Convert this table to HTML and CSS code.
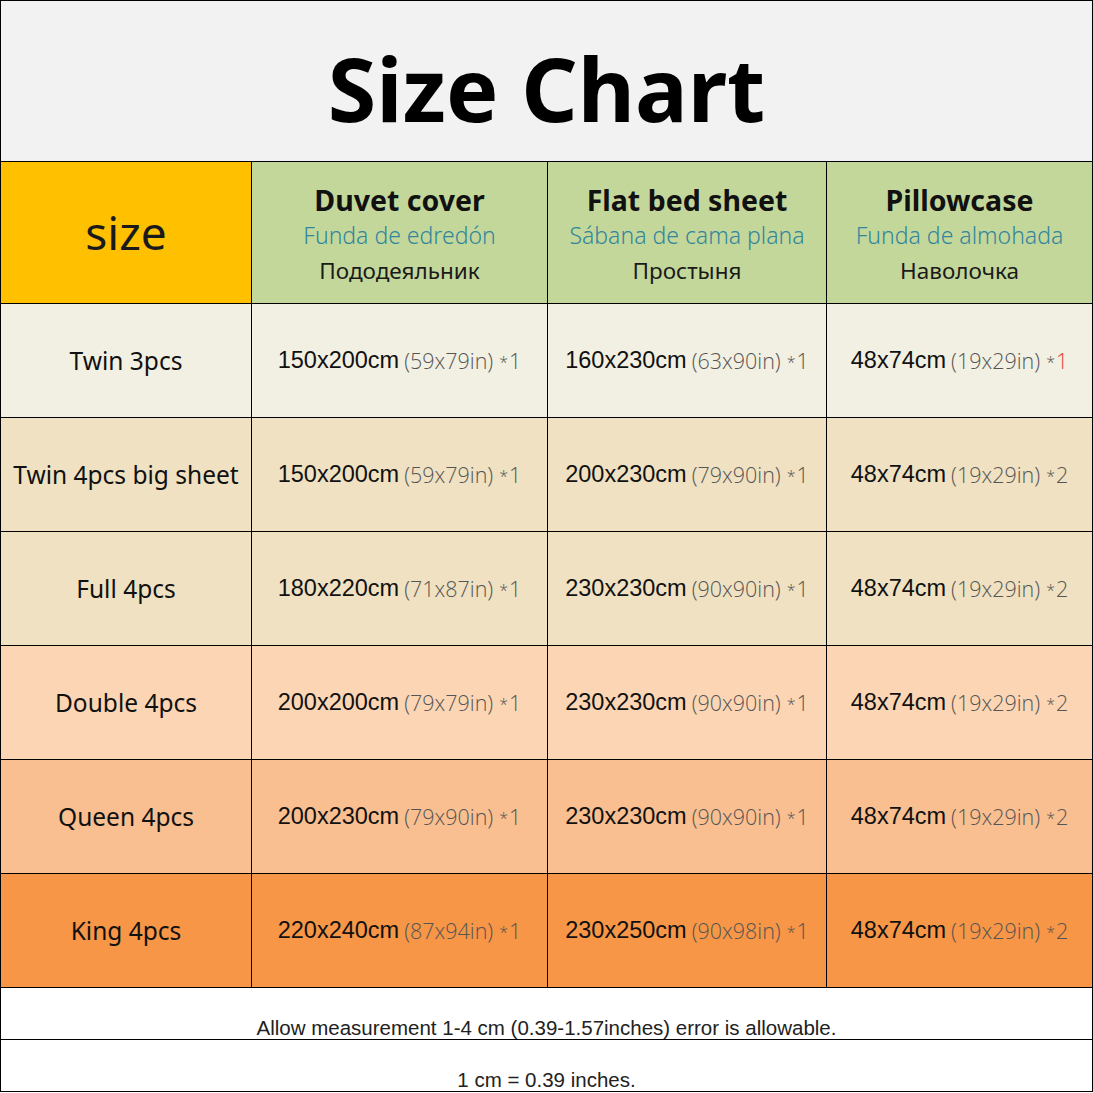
FILE: index.html
```html
<!DOCTYPE html>
<html>
<head>
<meta charset="utf-8">
<link rel="stylesheet" href="styles.css">
</head>
<body>
<div class="chart">
  <div class="title">Size Chart</div>

  <div class="cell head-size">size</div>
  <div class="cell head">
    <div class="en">Duvet cover</div>
    <div class="es">Funda de edredón</div>
    <div class="ru">Пододеяльник</div>
  </div>
  <div class="cell head">
    <div class="en">Flat bed sheet</div>
    <div class="es">Sábana de cama plana</div>
    <div class="ru">Простыня</div>
  </div>
  <div class="cell head">
    <div class="en">Pillowcase</div>
    <div class="es">Funda de almohada</div>
    <div class="ru">Наволочка</div>
  </div>

  <div class="cell label r1">Twin 3pcs</div>
  <div class="cell r1"><span class="cm">150x200cm</span> <span class="in">(59x79in)</span> <span class="qty"><span class="star">*</span>1</span></div>
  <div class="cell r1"><span class="cm">160x230cm</span> <span class="in">(63x90in)</span> <span class="qty"><span class="star">*</span>1</span></div>
  <div class="cell r1"><span class="cm">48x74cm</span> <span class="in">(19x29in)</span> <span class="qty"><span class="star">*</span><span class="red">1</span></span></div>

  <div class="cell label r2">Twin 4pcs big sheet</div>
  <div class="cell r2"><span class="cm">150x200cm</span> <span class="in">(59x79in)</span> <span class="qty"><span class="star">*</span>1</span></div>
  <div class="cell r2"><span class="cm">200x230cm</span> <span class="in">(79x90in)</span> <span class="qty"><span class="star">*</span>1</span></div>
  <div class="cell r2"><span class="cm">48x74cm</span> <span class="in">(19x29in)</span> <span class="qty"><span class="star">*</span>2</span></div>

  <div class="cell label r3">Full 4pcs</div>
  <div class="cell r3"><span class="cm">180x220cm</span> <span class="in">(71x87in)</span> <span class="qty"><span class="star">*</span>1</span></div>
  <div class="cell r3"><span class="cm">230x230cm</span> <span class="in">(90x90in)</span> <span class="qty"><span class="star">*</span>1</span></div>
  <div class="cell r3"><span class="cm">48x74cm</span> <span class="in">(19x29in)</span> <span class="qty"><span class="star">*</span>2</span></div>

  <div class="cell label r4">Double 4pcs</div>
  <div class="cell r4"><span class="cm">200x200cm</span> <span class="in">(79x79in)</span> <span class="qty"><span class="star">*</span>1</span></div>
  <div class="cell r4"><span class="cm">230x230cm</span> <span class="in">(90x90in)</span> <span class="qty"><span class="star">*</span>1</span></div>
  <div class="cell r4"><span class="cm">48x74cm</span> <span class="in">(19x29in)</span> <span class="qty"><span class="star">*</span>2</span></div>

  <div class="cell label r5">Queen 4pcs</div>
  <div class="cell r5"><span class="cm">200x230cm</span> <span class="in">(79x90in)</span> <span class="qty"><span class="star">*</span>1</span></div>
  <div class="cell r5"><span class="cm">230x230cm</span> <span class="in">(90x90in)</span> <span class="qty"><span class="star">*</span>1</span></div>
  <div class="cell r5"><span class="cm">48x74cm</span> <span class="in">(19x29in)</span> <span class="qty"><span class="star">*</span>2</span></div>

  <div class="cell label r6">King 4pcs</div>
  <div class="cell r6"><span class="cm">220x240cm</span> <span class="in">(87x94in)</span> <span class="qty"><span class="star">*</span>1</span></div>
  <div class="cell r6"><span class="cm">230x250cm</span> <span class="in">(90x98in)</span> <span class="qty"><span class="star">*</span>1</span></div>
  <div class="cell r6"><span class="cm">48x74cm</span> <span class="in">(19x29in)</span> <span class="qty"><span class="star">*</span>2</span></div>

  <div class="note">Allow measurement 1-4 cm (0.39-1.57inches) error is allowable.</div>
  <div class="note">1 cm = 0.39 inches.</div>
</div>
</body>
</html>
```

FILE: styles.css
```css
html, body {
  margin: 0;
  padding: 0;
  background: #ffffff;
}

.chart {
  width: 1093px;
  box-sizing: border-box;
  border-left: 1px solid #000;
  border-top: 1px solid #000;
  display: grid;
  grid-template-columns: 251px 296px 279px 266px;
  grid-template-rows: 161px 142px repeat(6, 114px) 52px 52px;
  font-family: "Noto Sans", "Open Sans", sans-serif;
}

.title {
  grid-column: 1 / -1;
  background: #f2f2f2;
  border-right: 1px solid #000;
  border-bottom: 1px solid #000;
  display: flex;
  align-items: center;
  justify-content: center;
  padding-top: 14px;
  box-sizing: border-box;
  font-family: "Noto Sans", "Open Sans", sans-serif;
  font-weight: 700;
  font-size: 88px;
  color: #000;
}

.cell {
  box-sizing: border-box;
  border-right: 1px solid #000;
  border-bottom: 1px solid #000;
  display: flex;
  align-items: center;
  justify-content: center;
  text-align: center;
  white-space: nowrap;
}

.head-size {
  background: #ffc000;
  font-size: 46px;
  color: #1a1a1a;
  padding-bottom: 2px;
}

.head {
  background: #c4d79b;
  flex-direction: column;
  padding-top: 6px;
}

.head .en {
  font-family: "Noto Sans", "Open Sans", sans-serif;
  font-weight: 700;
  font-size: 28.5px;
  line-height: 35px;
  color: #111;
}

.head .es {
  font-size: 23px;
  line-height: 35px;
  color: #31869b;
  font-weight: 300;
}

.head .ru {
  font-size: 22.5px;
  line-height: 35px;
  color: #1a1a1a;
  font-weight: 400;
}

.label {
  font-size: 24.5px;
  color: #111;
}

.cm {
  font-family: "Liberation Sans", Arial, sans-serif;
  font-size: 23.5px;
  color: #111;
}

.in {
  font-family: "Open Sans", "Noto Sans", sans-serif;
  font-weight: 300;
  font-size: 21.5px;
  color: #555;
  margin-left: 5px;
}

.qty {
  font-family: "Open Sans", "Noto Sans", sans-serif;
  font-weight: 300;
  font-size: 21.5px;
  color: #555;
  margin-left: 6px;
}

.star {
  font-size: 16px;
  vertical-align: 1px;
  margin-right: 1px;
}

.qty .red {
  color: #e53935;
}

.r1 { background: #f2f0e2; }
.r2 { background: #efe1c1; }
.r3 { background: #efe1c1; }
.r4 { background: #fcd6b4; }
.r5 { background: #f9bf90; }
.r6 { background: #f79646; }

.note {
  grid-column: 1 / -1;
  box-sizing: border-box;
  border-right: 1px solid #000;
  border-bottom: 1px solid #000;
  display: flex;
  align-items: flex-end;
  justify-content: center;
  font-family: "Liberation Sans", Arial, sans-serif;
  font-size: 20.5px;
  color: #222;
  line-height: 22px;
}
```
